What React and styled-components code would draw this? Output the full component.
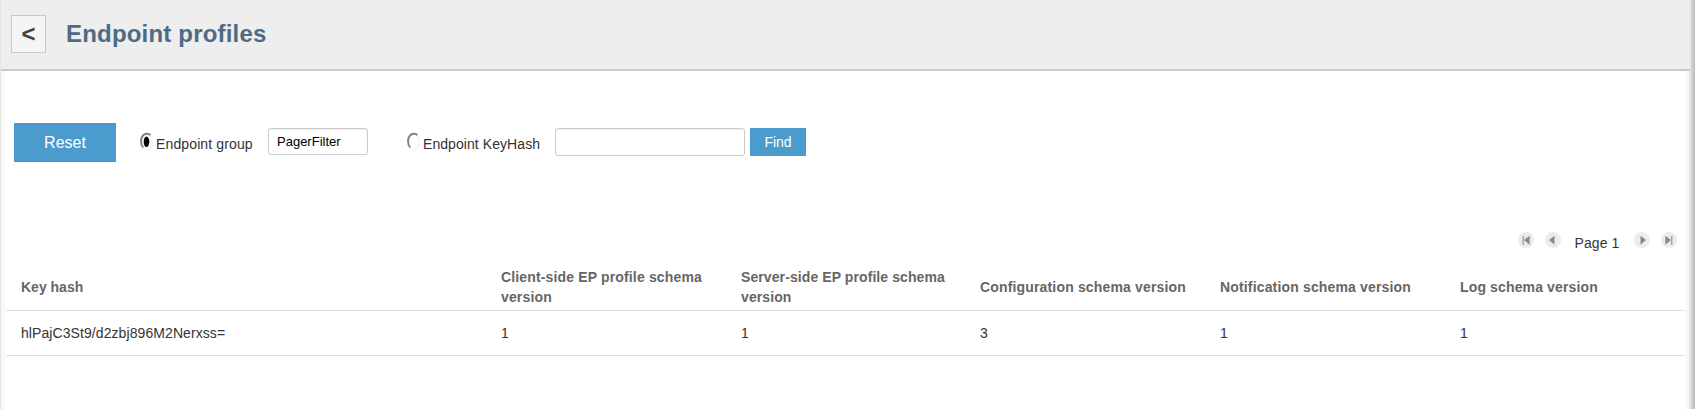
import React from "react";
import styled, { createGlobalStyle } from "styled-components";

const GlobalStyle = createGlobalStyle`
  * { box-sizing: border-box; }
  html, body { margin: 0; background: #fff; }
  body {
    font: 14px/20px "Liberation Sans", Arial, sans-serif;
    color: #333;
    overflow: hidden;
  }
`;

const Page = styled.div`
  display: flex;
  height: 409px;
`;

const LeftEdge = styled.div`
  flex: 0 0 1px;
  background: #e6e6e6;
`;

const RightEdge = styled.div`
  flex: 0 0 5px;
  background: linear-gradient(to right, #e2e2e2, #b8b8b8);
`;

const Panel = styled.main`
  flex: 1;
  min-width: 0;
`;

const Header = styled.header`
  display: flex;
  align-items: flex-start;
  height: 71px;
  padding: 15px 10px 0;
  background: #eee;
  border-bottom: 2px solid #cacaca;
`;

const BackButton = styled.button`
  width: 35px;
  height: 38px;
  padding: 0;
  border: 1px solid #c8c8c8;
  background: #f5f5f5;
  color: #444;
  font: bold 24px/36px "Liberation Sans", Arial, sans-serif;
`;

const Title = styled.h1`
  margin: 0 0 0 20px;
  color: #4d6b85;
  font-size: 24px;
  line-height: 38px;
  letter-spacing: 0.19px;
`;

const Content = styled.section`
  height: 338px;
  padding: 52px 5px 0;
  background: linear-gradient(to right, #f4f4f4, #fff 5px, #fff calc(100% - 5px), #ececec);
`;

const Filters = styled.div`
  display: flex;
  align-items: flex-start;
  height: 104px;
  padding-left: 8px;
`;

const ActionButton = styled.button`
  width: ${(p) => (p.$large ? 102 : 56)}px;
  height: ${(p) => (p.$large ? 39 : 28)}px;
  margin: ${(p) => (p.$large ? "0 24px 0 0" : "5px 0 0 5px")};
  padding: 0;
  border: 0;
  background: #4b9bcd;
  color: #fff;
  font: ${(p) => (p.$large ? 16 : 14)}px "Liberation Sans", Arial, sans-serif;
`;

const Option = styled.label`
  display: flex;
  align-items: flex-start;
  width: ${(p) => p.$width}px;
  margin-top: 9px;
  letter-spacing: ${(p) => p.$tracking}px;
  white-space: nowrap;
`;

const RadioMark = styled.svg`
  flex: none;
  width: 13px;
  height: 20px;
  margin-right: 3px;
`;

const OptionText = styled.span`
  padding-top: 2px;
`;

const TextInput = styled.input`
  width: ${(p) => p.$width}px;
  height: ${(p) => p.$height}px;
  margin: 5px 0 0;
  padding: 0 8px;
  border: 1px solid #ccc;
  border-radius: 3px;
  box-shadow: inset 0 1px 1px rgba(0, 0, 0, 0.075);
  background: #fff;
  color: #000;
  font: 13px "Liberation Sans", Arial, sans-serif;
  outline: 0;
`;

const Gap = styled.div`
  width: 39px;
`;

const Pager = styled.nav`
  display: flex;
  justify-content: flex-end;
  align-items: flex-start;
  height: 37px;
  padding: 5px 8px 0 0;
`;

const PagerButton = styled.button`
  display: flex;
  width: 16px;
  height: 16px;
  margin-left: ${(p) => p.$gap || 0}px;
  padding: 0;
  border: 0;
  border-radius: 50%;
  background: #ececec;
`;

const PageLabel = styled.span`
  margin: 1px 14.5px 0 13.5px;
  letter-spacing: 0.1px;
`;

const Table = styled.table`
  width: 1679px;
  table-layout: fixed;
  border-collapse: separate;
  border-spacing: 0;
`;

const HeadCell = styled.th`
  width: ${(p) => p.$width}px;
  height: 47px;
  padding: 3px 0 3px 15px;
  border-bottom: 1px solid #ddd;
  color: #666;
  letter-spacing: ${(p) => p.$tracking}px;
  text-align: left;
  vertical-align: middle;
`;

const Cell = styled.td`
  height: 45px;
  padding: 0 15px;
  border-bottom: 1px solid #ddd;
  letter-spacing: 0.08px;
`;

function Radio({ checked }) {
  return (
    <RadioMark viewBox="0 0 13 20" role="img">
      <ellipse cx="6.8" cy="10" rx="5.2" ry="8" fill="none" stroke="#f3f3f3" strokeWidth="1.5" />
      <path d="M3.2 15.5C.2 12.5 .4 5.5 3.5 3C5.6 1.2 8.8 1.4 10.5 3.2" fill="none" stroke="#808080" strokeWidth="1.9" />
      {checked && <ellipse cx="6.5" cy="9.7" rx="2.8" ry="5.2" fill="#000" />}
    </RadioMark>
  );
}

function PagerIcon({ forward, end }) {
  return (
    <svg width="16" height="16" viewBox="0 0 16 16" fill="#888">
      <g transform={forward ? "translate(16 0) scale(-1 1)" : undefined}>
        <path d={end ? "M6 8L11.7 3.7V12.7Z" : "M4 8L9.5 3.7V12.7Z"} />
        {end && <path d="M4.5 4h1.6v9H4.5z" fill="#aaa" />}
      </g>
    </svg>
  );
}

const columns = [
  { label: "Key hash", width: 480, tracking: 0 },
  { label: "Client-side EP profile schema version", width: 240, tracking: 0.15 },
  { label: "Server-side EP profile schema version", width: 239, tracking: 0.09 },
  { label: "Configuration schema version", width: 240, tracking: 0.16 },
  { label: "Notification schema version", width: 240, tracking: 0.16 },
  { label: "Log schema version", width: 240, tracking: 0.14 },
];
const row = ["hlPajC3St9/d2zbj896M2Nerxss=", "1", "1", "3", "1", "1"];

export default function App() {
  return (
    <>
      <GlobalStyle />
      <Page>
        <LeftEdge />
        <Panel>
          <Header>
            <BackButton>&lt;</BackButton>
            <Title>Endpoint profiles</Title>
          </Header>
          <Content>
            <Filters>
              <ActionButton $large>Reset</ActionButton>
              <Option $width={128} $tracking={0.13}>
                <Radio checked />
                <OptionText>Endpoint group</OptionText>
              </Option>
              <TextInput $width={100} $height={27} defaultValue="PagerFilter" />
              <Gap />
              <Option $width={148} $tracking={0.07}>
                <Radio />
                <OptionText>Endpoint KeyHash</OptionText>
              </Option>
              <TextInput $width={190} $height={28} />
              <ActionButton>Find</ActionButton>
            </Filters>
            <Pager>
              <PagerButton><PagerIcon end /></PagerButton>
              <PagerButton $gap={11}><PagerIcon /></PagerButton>
              <PageLabel>Page 1</PageLabel>
              <PagerButton><PagerIcon forward /></PagerButton>
              <PagerButton $gap={11}><PagerIcon forward end /></PagerButton>
            </Pager>
            <Table>
              <thead>
                <tr>
                  {columns.map((c) => (
                    <HeadCell key={c.label} $width={c.width} $tracking={c.tracking}>{c.label}</HeadCell>
                  ))}
                </tr>
              </thead>
              <tbody>
                <tr>{row.map((v, i) => <Cell key={i}>{v}</Cell>)}</tr>
              </tbody>
            </Table>
          </Content>
        </Panel>
        <RightEdge />
      </Page>
    </>
  );
}
